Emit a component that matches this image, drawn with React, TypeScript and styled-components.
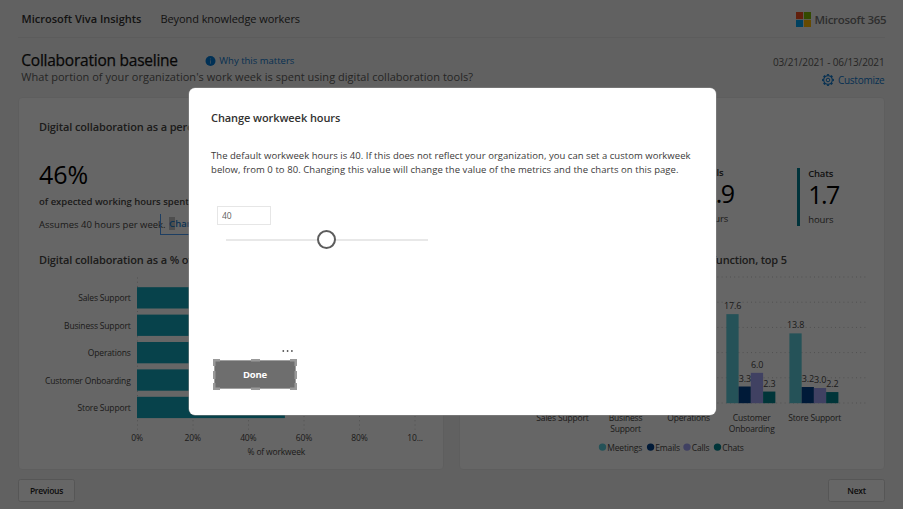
import React from 'react';
import styled, { createGlobalStyle } from 'styled-components';

const FONT = '"Open Sans", "Noto Sans", sans-serif';

const GlobalStyle = createGlobalStyle`
  * { box-sizing: border-box; }
  body { margin: 0; background: #f3f3f3; font-family: ${FONT}; overflow: hidden; }
`;

const Screen = styled.div`
  position: relative;
  width: 903px;
  height: 509px;
  overflow: hidden;
`;

const Page = styled.div`
  display: flex;
  flex-direction: column;
  height: 509px;
  padding: 0 18px;
  background: #f3f3f3;
`;

const Text = styled.span<{
  $size: number;
  $line?: number;
  $weight?: number;
  $spacing?: number;
  $color?: string;
}>`
  font-size: ${(p) => p.$size}px;
  line-height: ${(p) => p.$line ?? 14}px;
  font-weight: ${(p) => p.$weight ?? 400};
  letter-spacing: ${(p) => p.$spacing ?? 0}px;
  color: ${(p) => p.$color ?? '#484644'};
  white-space: nowrap;
`;

const PageTitle = styled(Text)`
  -webkit-text-stroke: 0.25px #111;
`;

const Header = styled.header`
  display: flex;
  align-items: center;
  height: 38px;
  padding-left: 3.5px;
  border-bottom: 1px solid #e6e6e6;
`;

const Section = styled.div`
  margin-left: 19px;
  display: flex;
`;

const Brand = styled.div`
  display: flex;
  align-items: center;
  gap: 3px;
  margin-left: auto;
  padding-top: 2px;
  margin-right: -1.3px;
`;

const TitleBar = styled.div`
  display: flex;
  justify-content: space-between;
  height: 59px;
  padding: 12px 0 0 3.3px;
`;

const TitleBlock = styled.div`
  display: flex;
  flex-direction: column;
`;

const TitleRow = styled.div`
  display: flex;
  align-items: center;
  height: 20px;
`;

const InfoLink = styled.a`
  display: flex;
  align-items: center;
  gap: 3.5px;
  margin-left: 27px;
  padding-top: 2px;
`;

const Period = styled.div`
  display: flex;
  flex-direction: column;
  align-items: flex-end;
  padding-top: 5px;
  margin-right: 0.5px;
  gap: 4px;
`;

const Customize = styled.a`
  display: flex;
  align-items: center;
  gap: 4px;
`;

const Cards = styled.main`
  display: grid;
  grid-template-columns: 426px 426px;
  justify-content: space-between;
  height: 373px;
`;

const Card = styled.section`
  display: flex;
  flex-direction: column;
  padding: 21.5px 0 0 20px;
  background: #fff;
  border: 1px solid #ececec;
  border-radius: 4px;
  overflow: hidden;
`;

const Metric = styled.div`
  display: flex;
  flex-direction: column;
  height: 133px;
`;

const MetricValue = styled.div`
  display: flex;
  margin: 25.5px 0 5.5px;
`;

const Assumption = styled.div`
  display: flex;
  margin-top: 6px;
  height: 20px;
`;

const ChangeLink = styled.a`
  height: 21px;
  width: 62px;
  margin: -1px 0 0 -6px;
  padding: 3px 0 0 8.5px;
  border: 1px solid #4a9cf5;
  border-top: 0;
  font-size: 9.5px;
  line-height: 13px;
  font-weight: 600;
  color: #1f7fd0;
`;

const Mark = styled.span`
  display: inline-block;
  background: #c4c4c4;
`;

const Stats = styled.div`
  display: grid;
  grid-template-columns: repeat(4, 105.3px);
  height: 85px;
  margin: 34px 0 0 0.8px;
`;

const Stat = styled.div<{ $accent: string; $lift?: boolean }>`
  display: flex;
  flex-direction: column;
  height: 58px;
  margin-top: ${(p) => (p.$lift ? -1 : 0)}px;
  padding-left: 8.5px;
  border-left: 3px solid ${(p) => p.$accent};
`;

const StatHeading = styled.div`
  width: 306.8px;
  display: flex;
  justify-content: flex-end;
`;

const Footer = styled.footer`
  display: flex;
  justify-content: space-between;
  padding-top: 9px;
`;

const NavButton = styled.button`
  width: 57px;
  height: 23px;
  padding: 0;
  background: #fff;
  border: 1px solid #d6d6d6;
  border-radius: 2.5px;
  font: 600 8.5px/21px ${FONT};
  letter-spacing: -0.28px;
  color: #252423;
`;

const Overlay = styled.div`
  position: absolute;
  inset: 0;
  display: flex;
  padding: 88px 0 0 189px;
  background: rgba(0, 0, 0, 0.6);
`;

const Dialog = styled.div`
  display: flex;
  flex-direction: column;
  width: 527px;
  height: 327px;
  padding: 23px 0 0 22px;
  background: #fff;
  border-radius: 6px;
  box-shadow: 0 0 0 0.5px #8a8a8a;
`;

const Message = styled.p`
  margin: 24px 0 0;
  display: flex;
  flex-direction: column;
`;

const HoursInput = styled.input`
  width: 54px;
  height: 19px;
  margin: 29.5px 0 0 6px;
  padding: 1px 4px 0;
  border: 1px solid #e6e6e6;
  font: 8.5px ${FONT};
  letter-spacing: -0.1px;
  color: #605e5c;
`;

const Track = styled.div`
  display: flex;
  align-items: center;
  justify-content: center;
  width: 202px;
  height: 2px;
  margin: 14px 0 0 15px;
  background: #e8e8e8;
`;

const Thumb = styled.div`
  flex: none;
  width: 19px;
  height: 19px;
  margin-right: 2px;
  border: 2px solid #5c5c5c;
  border-radius: 50%;
  background: #fff;
`;

const DoneBlock = styled.div`
  display: flex;
  flex-direction: column;
  align-items: flex-end;
  gap: 6px;
  width: 84px;
  margin: 108px 0 0 2px;
`;

const DoneButton = styled.button`
  position: relative;
  width: 84px;
  height: 31px;
  padding: 0;
  border: 0;
  background: transparent;
  font: 700 9.5px/32px ${FONT};
  letter-spacing: -0.15px;
  color: #fff;
`;

const Frame = styled.svg`
  position: absolute;
  inset: 0;
`;

const Label = styled.span`
  position: relative;
`;

const ChartText = styled.text<{ $size?: number }>`
  font-family: ${FONT};
  font-size: ${(p) => p.$size ?? 8.5}px;
  letter-spacing: -0.16px;
  fill: #484644;
`;

const MicrosoftLogo = () => (
  <svg width="15" height="15" viewBox="0 0 15 15">
    <rect width="7.1" height="7.1" fill="#f25022" />
    <rect x="7.9" width="7.1" height="7.1" fill="#7fba00" />
    <rect y="7.9" width="7.1" height="7.1" fill="#00a4ef" />
    <rect x="7.9" y="7.9" width="7.1" height="7.1" fill="#ffb900" />
  </svg>
);

const InfoIcon = () => (
  <svg width="11" height="11" viewBox="0 0 11 11">
    <circle cx="5.5" cy="5" r="5" fill="#0078d4" />
    <rect x="5" y="4.3" width="1" height="3.4" fill="#7db6e3" />
    <rect x="5" y="2.4" width="1" height="1" fill="#7db6e3" />
  </svg>
);

const teeth = Array.from({ length: 8 }, (_, i) => i * 45);

const GearIcon = () => (
  <svg width="12" height="12" viewBox="-6 -6 12 12" fill="none" stroke="#0f78cc">
    <circle r="4.3" strokeWidth="1.1" />
    <circle r="1.8" strokeWidth="1" />
    {teeth.map((a) => (
      <rect key={a} x="-1.1" y="-5.9" width="2.2" height="1.5" fill="#0f78cc" stroke="none" transform={`rotate(${a})`} />
    ))}
  </svg>
);

const functions = [
  { name: 'Sales Support', share: 62 },
  { name: 'Business Support', share: 59 },
  { name: 'Operations', share: 57 },
  { name: 'Customer Onboarding', share: 55 },
  { name: 'Store Support', share: 53 },
];

const ticks = ['0%', '20%', '40%', '60%', '80%', '10...'];

const BarChart = () => (
  <svg width="404" height="200" viewBox="39 266.5 404 200">
    {ticks.map((t, i) => (
      <g key={t}>
        <line
          x1={137.5 + i * 55.5}
          x2={137.5 + i * 55.5}
          y1="277"
          y2="429"
          stroke="#c8c8c8"
          strokeDasharray="1 3.2"
        />
        <ChartText x={137.1 + i * 55.6} y="440" textAnchor="middle">
          {t}
        </ChartText>
      </g>
    ))}
    {functions.map((f, i) => (
      <g key={f.name}>
        <rect x="137" y={286.7 + i * 27.4} width={f.share * 2.79} height="21.3" fill="#12a5bc" />
        <ChartText x="130.6" y={300.8 + i * 27.45} textAnchor="end">
          {f.name}
        </ChartText>
      </g>
    ))}
    <ChartText x="276.3" y="454.3" textAnchor="middle">
      % of workweek
    </ChartText>
  </svg>
);

const series = [
  { name: 'Meetings', color: '#5cccdb', x: 602.5 },
  { name: 'Emails', color: '#00418c', x: 650.6 },
  { name: 'Calls', color: '#a0a2f5', x: 687 },
  { name: 'Chats', color: '#008490', x: 717.5 },
];

const groups = [
  { lines: ['Sales Support'], values: [16.2, 4.1, 2.8, 1.9] },
  { lines: ['Business', 'Support'], values: [15.4, 3.9, 2.6, 1.8] },
  { lines: ['Operations'], values: [14.9, 3.5, 2.9, 2.0] },
  { lines: ['Customer', 'Onboarding'], values: [17.6, 3.3, 6.0, 2.3] },
  { lines: ['Store Support'], values: [13.8, 3.2, 3.0, 2.2] },
];

const BASE = 402.7;
const UNIT = 5.06;

const ColumnChart = () => (
  <svg width="404" height="200" viewBox="480 266.5 404 200">
    {[0, 1, 2, 3, 4, 5].map((n) => (
      <line
        key={n}
        x1="520"
        x2="866"
        y1={402.5 - n * 25.2}
        y2={402.5 - n * 25.2}
        stroke="#c8c8c8"
        strokeDasharray="1 3.2"
      />
    ))}
    {groups.map((g, i) => {
      const center = 562.5 + i * 63.05;
      const left = center - 25.3;
      return (
        <g key={g.lines[0]}>
          {g.values.map((v, s) => (
            <rect
              key={s}
              x={left + s * 12.25}
              y={BASE - v * UNIT}
              width="12.25"
              height={v * UNIT}
              fill={series[s].color}
            />
          ))}
          {g.values.map((v, s) => (
            <ChartText key={s} $size={9} x={left + 6.2 + s * 12.25} y={BASE - v * UNIT - 5} textAnchor="middle">
              {v.toFixed(1)}
            </ChartText>
          ))}
          {g.lines.map((l, n) => (
            <ChartText key={l} x={center} y={420.5 + n * 11.3} textAnchor="middle">
              {l}
            </ChartText>
          ))}
        </g>
      );
    })}
    {series.map((s) => (
      <g key={s.name}>
        <circle cx={s.x} cy="446.6" r="3.7" fill={s.color} />
        <ChartText x={s.x + 4.7} y="450">
          {s.name}
        </ChartText>
      </g>
    ))}
  </svg>
);

const stats = [
  { name: 'Meetings', value: '9.6', accent: '#5cccdb' },
  { name: 'Emails', value: '3.4', accent: '#00418c' },
  { name: 'Calls', value: '2.9', accent: '#a0a2f5', lift: true },
  { name: 'Chats', value: '1.7', accent: '#008094' },
];

const handles = [
  [0, 0, 7, 2.5], [0, 0, 2.5, 7], [77, 0, 7, 2.5], [81.5, 0, 2.5, 7],
  [0, 28.5, 7, 2.5], [0, 24, 2.5, 7], [77, 28.5, 7, 2.5], [81.5, 24, 2.5, 7],
  [38, 0, 9, 2.5], [38, 28.5, 9, 2.5], [0, 12, 2.5, 8], [81.5, 12, 2.5, 8],
];

export default function App() {
  return (
    <Screen>
      <GlobalStyle />
      <Page>
        <Header>
          <Text $size={11} $weight={600} $color="#323130">Microsoft Viva Insights</Text>
          <Section>
            <Text $size={11} $spacing={-0.08} $color="#323130">Beyond knowledge workers</Text>
          </Section>
          <Brand>
            <MicrosoftLogo />
            <Text $size={11.5} $weight={600} $spacing={-0.28} $color="#737373">Microsoft 365</Text>
          </Brand>
        </Header>

        <TitleBar>
          <TitleBlock>
            <TitleRow>
              <PageTitle $size={15.5} $line={20} $spacing={-0.24} $color="#111">Collaboration baseline</PageTitle>
              <InfoLink>
                <InfoIcon />
                <Text $size={9.5} $color="#0f78cc">Why this matters</Text>
              </InfoLink>
            </TitleRow>
            <Text $size={11} $spacing={0.025} $color="#605e5c">
              What portion of your organization's work week is spent using digital collaboration tools?
            </Text>
          </TitleBlock>
          <Period>
            <Text $size={10} $spacing={-0.13} $color="#605e5c">03/21/2021 - 06/13/2021</Text>
            <Customize>
              <GearIcon />
              <Text $size={10} $spacing={-0.25} $color="#0f78cc">Customize</Text>
            </Customize>
          </Period>
        </TitleBar>

        <Cards>
          <Card>
            <Metric>
              <Text $size={11} $weight={600} $spacing={-0.13}>Digital collaboration as a percentage of workweek</Text>
              <MetricValue>
                <Text $size={25} $line={30} $color="#000">46%</Text>
              </MetricValue>
              <Text $size={9.5} $weight={600} $spacing={-0.02}>
                of expected working hours spent on digital collaboration
              </Text>
              <Assumption>
                <Text $size={9.5} $line={20}>Assumes 40 hours per week.</Text>
                <ChangeLink><Mark>C</Mark>hange</ChangeLink>
              </Assumption>
            </Metric>
            <Text $size={11} $weight={600} $spacing={-0.13}>Digital collaboration as a % of workweek by function</Text>
            <BarChart />
          </Card>

          <Card>
            <Text $size={11} $weight={600} $spacing={-0.13}>Average weekly hours per person</Text>
            <Stats>
              {stats.map((s) => (
                <Stat key={s.name} $accent={s.accent} $lift={s.lift}>
                  <Text $size={9.5} $line={11} $weight={600} $spacing={-0.19} $color="#323130">{s.name}</Text>
                  <Text $size={25} $line={30} $spacing={-1.5} $color="#000">{s.value}</Text>
                  <Text $size={9.5} $line={22} $spacing={-0.1}>hours</Text>
                </Stat>
              ))}
            </Stats>
            <StatHeading>
              <Text $size={11} $weight={600} $spacing={-0.18}>Collaboration hours by organization function, top 5</Text>
            </StatHeading>
            <ColumnChart />
          </Card>
        </Cards>

        <Footer>
          <NavButton>Previous</NavButton>
          <NavButton>Next</NavButton>
        </Footer>
      </Page>

      <Overlay>
        <Dialog role="dialog">
          <Text $size={11} $weight={600} $spacing={-0.08} $color="#323130">Change workweek hours</Text>
          <Message>
            <Text $size={9.5} $line={13.5} $spacing={0.036} $color="#3b3a39">
              The default workweek hours is 40. If this does not reflect your organization, you can set a custom workweek
            </Text>
            <Text $size={9.5} $line={13.5} $spacing={0.064} $color="#3b3a39">
              below, from 0 to 80. Changing this value will change the value of the metrics and the charts on this page.
            </Text>
          </Message>
          <HoursInput defaultValue="40" />
          <Track>
            <Thumb />
          </Track>
          <DoneBlock>
            <svg width="16" height="4" viewBox="0 0 16 4" fill="#555">
              <circle cx="2.3" cy="2" r="0.9" />
              <circle cx="6.6" cy="2" r="0.9" />
              <circle cx="10.9" cy="2" r="0.9" />
            </svg>
            <DoneButton>
              <Frame width="84" height="31" viewBox="0 0 84 31">
                <rect x="1.5" y="1.5" width="81" height="28" fill="#6e6e6e" stroke="#a0a0a0" />
                {handles.map(([x, y, w, h], i) => (
                  <rect key={i} x={x} y={y} width={w} height={h} fill="#999" />
                ))}
              </Frame>
              <Label>Done</Label>
            </DoneButton>
          </DoneBlock>
        </Dialog>
      </Overlay>
    </Screen>
  );
}
